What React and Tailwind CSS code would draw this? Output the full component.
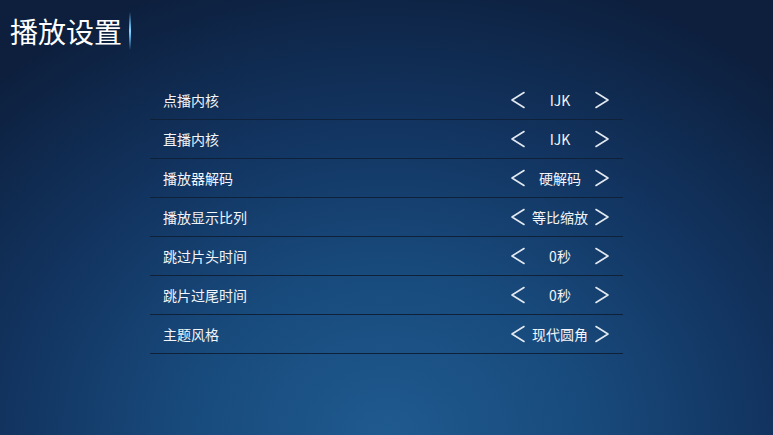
import React from 'react';

const rows = [
  { label: '点播内核', value: 'IJK' },
  { label: '直播内核', value: 'IJK' },
  { label: '播放器解码', value: '硬解码' },
  { label: '播放显示比列', value: '等比缩放' },
  { label: '跳过片头时间', value: '0秒' },
  { label: '跳片过尾时间', value: '0秒' },
  { label: '主题风格', value: '现代圆角' },
];

const font = { fontFamily: '"Noto Sans CJK SC", "Liberation Sans", sans-serif' };

function Chevron({ dir }) {
  return (
    <svg className="w-[16px] h-[20px] shrink-0" viewBox="0 0 16 20" fill="none">
      <path
        d={dir === 'left' ? 'M14 2.5 L2 10 L14 17.5' : 'M2 2.5 L14 10 L2 17.5'}
        stroke="#e3e9f0"
        strokeWidth="1.6"
        strokeLinecap="round"
        strokeLinejoin="round"
      />
    </svg>
  );
}

export default function App() {
  return (
    <div
      className="w-[773px] h-[435px] overflow-hidden text-white bg-[radial-gradient(ellipse_75%_110%_at_50%_100%,#1f5a8f_0%,#184a7c_35%,#123460_65%,#0d1f3d_100%)]"
      style={font}
    >
      <div className="flex items-center h-[62px] pl-[10px]">
        <h1 className="text-[28px] leading-none text-white">播放设置</h1>
        <div className="ml-[7px] w-[2px] h-[38px] rounded-full bg-[linear-gradient(to_bottom,transparent,#63bdf0_40%,#8fd4ff_50%,#63bdf0_60%,transparent)]" />
      </div>

      <div className="ml-[150px] w-[473px] mt-[19px]">
        {rows.map((r) => (
          <div
            key={r.label}
            className="flex items-center justify-between h-[39px] border-b border-[#0f2138] pl-[13px] pr-[13px]"
          >
            <span className="text-[14px] text-[#f2f5f9]">{r.label}</span>
            <div className="flex items-center">
              <Chevron dir="left" />
              <span className="w-[68px] text-center text-[14px] text-[#f2f5f9]">{r.value}</span>
              <Chevron dir="right" />
            </div>
          </div>
        ))}
      </div>
    </div>
  );
}
